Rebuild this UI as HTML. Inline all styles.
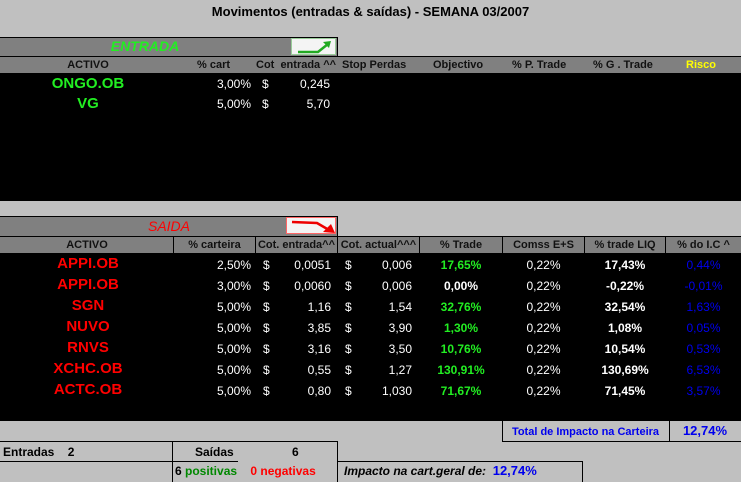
<!DOCTYPE html>
<html><head><meta charset="utf-8"><style>
body{margin:0;width:741px;height:482px;background:#c0c0c0;position:relative;overflow:hidden;font-family:"Liberation Sans",Arial,sans-serif}
div{position:absolute;box-sizing:border-box}
.t{white-space:nowrap;font-size:12px;line-height:14px}
.h{font-weight:bold;font-size:11px;color:#111}
.c{text-align:center}
.r{text-align:right}
.w{color:#fff}
.nm{font-weight:bold;font-size:15px;text-align:center;width:176px;left:0}
</style></head><body>
<div class="t" style="left:0;width:741px;top:5px;text-align:center;font-weight:bold;font-size:13px;color:#000">Movimentos (entradas &amp; saídas) - SEMANA 03/2007</div>

<!-- ENTRADA -->
<div style="left:0;top:37px;width:338px;height:20px;background:#808080;border-top:1px solid #000;border-right:1px solid #000"></div>
<div class="t" style="left:0;width:290px;top:39px;text-align:center;color:#22ee22;font-style:italic;font-weight:bold;font-size:14px">ENTRADA</div>
<div style="left:291px;top:38px;width:45px;height:17px;background:#f4f4f4;border:1px solid #9c9;"><svg width="45" height="17" style="position:absolute;left:0;top:0"><path d="M6 13 L26 13 L36 5" stroke="#2a2" stroke-width="2.5" fill="none"/><path d="M31 3 L39 2 L37 9 Z" fill="#2a2"/></svg></div>
<div style="left:0;top:56px;width:741px;height:17px;background:#808080;border-top:1px solid #000"></div>
<div class="t h c" style="left:0;width:176px;top:58px">ACTIVO</div>
<div class="t h" style="left:197px;top:58px">% cart</div>
<div class="t h" style="left:256px;top:58px">Cot&nbsp; entrada ^^</div>
<div class="t h" style="left:342px;top:58px">Stop Perdas</div>
<div class="t h" style="left:433px;top:58px">Objectivo</div>
<div class="t h" style="left:512px;top:58px">% P. Trade</div>
<div class="t h" style="left:593px;top:58px">% G . Trade</div>
<div class="t h" style="left:686px;top:58px;color:#ff0">Risco</div>
<div style="left:0;top:73px;width:741px;height:128px;background:#000"></div>
<div class="t nm" style="top:77px;color:#22ee22">ONGO.OB</div>
<div class="t nm" style="top:97px;color:#22ee22">VG</div>
<div class="t w r" style="left:200px;width:51px;top:77px">3,00%</div>
<div class="t w" style="left:262px;top:77px">$</div>
<div class="t w r" style="left:280px;width:50px;top:77px">0,245</div>
<div class="t w r" style="left:200px;width:51px;top:97px">5,00%</div>
<div class="t w" style="left:262px;top:97px">$</div>
<div class="t w r" style="left:280px;width:50px;top:97px">5,70</div>

<!-- SAIDA -->
<div style="left:0;top:216px;width:338px;height:21px;background:#808080;border-top:1px solid #000;border-right:1px solid #000"></div>
<div class="t" style="left:0;width:338px;top:219px;text-align:center;color:#f00;font-style:italic;font-size:14px">SAIDA</div>
<div style="left:286px;top:217px;width:50px;height:17px;background:#f4f4f4;border:1px solid #f66"><svg width="50" height="17" style="position:absolute;left:0;top:0"><path d="M5 4 L30 5 L42 12" stroke="#e00" stroke-width="2.5" fill="none"/><path d="M36 14 L48 15 L44 6 Z" fill="#e00"/></svg></div>
<div style="left:0;top:236px;width:741px;height:17px;background:#808080;border-top:1px solid #000"></div>
<div style="left:173px;top:236px;width:1px;height:17px;background:#000"></div>
<div style="left:255px;top:236px;width:1px;height:17px;background:#000"></div>
<div style="left:337px;top:236px;width:1px;height:17px;background:#000"></div>
<div style="left:419px;top:236px;width:1px;height:17px;background:#000"></div>
<div style="left:502px;top:236px;width:1px;height:17px;background:#000"></div>
<div style="left:584px;top:236px;width:1px;height:17px;background:#000"></div>
<div style="left:665px;top:236px;width:1px;height:17px;background:#000"></div>
<div class="t h c" style="left:0;width:174px;top:238px">ACTIVO</div>
<div class="t h c" style="left:174px;width:81px;top:238px">% carteira</div>
<div class="t h c" style="left:256px;width:81px;top:238px">Cot. entrada^^</div>
<div class="t h c" style="left:338px;width:81px;top:238px">Cot. actual^^^</div>
<div class="t h c" style="left:420px;width:82px;top:238px">% Trade</div>
<div class="t h c" style="left:503px;width:81px;top:238px">Comss E+S</div>
<div class="t h c" style="left:585px;width:80px;top:238px">% trade LIQ</div>
<div class="t h c" style="left:666px;width:75px;top:238px">% do I.C ^</div>
<div style="left:0;top:253px;width:741px;height:168px;background:#000"></div>

<div class="t nm" style="top:257px;color:#f00">APPI.OB</div>
<div class="t nm" style="top:278px;color:#f00">APPI.OB</div>
<div class="t nm" style="top:299px;color:#f00">SGN</div>
<div class="t nm" style="top:320px;color:#f00">NUVO</div>
<div class="t nm" style="top:341px;color:#f00">RNVS</div>
<div class="t nm" style="top:362px;color:#f00">XCHC.OB</div>
<div class="t nm" style="top:383px;color:#f00">ACTC.OB</div>

<div class="t w r" style="left:190px;width:61px;top:255px;white-space:pre-line;line-height:21px">2,50%
3,00%
5,00%
5,00%
5,00%
5,00%
5,00%</div>
<div class="t w" style="left:263px;top:255px;white-space:pre-line;line-height:21px">$
$
$
$
$
$
$</div>
<div class="t w r" style="left:270px;width:61px;top:255px;white-space:pre-line;line-height:21px">0,0051
0,0060
1,16
3,85
3,16
0,55
0,80</div>
<div class="t w" style="left:345px;top:255px;white-space:pre-line;line-height:21px">$
$
$
$
$
$
$</div>
<div class="t w r" style="left:350px;width:62px;top:255px;white-space:pre-line;line-height:21px">0,006
0,006
1,54
3,90
3,50
1,27
1,030</div>
<div class="t c" style="left:420px;width:82px;top:255px;line-height:21px;font-weight:bold;color:#22ee22">17,65%<br><span style="color:#fff">0,00%</span><br>32,76%<br>1,30%<br>10,76%<br>130,91%<br>71,67%</div>
<div class="t w c" style="left:503px;width:81px;top:255px;white-space:pre-line;line-height:21px">0,22%
0,22%
0,22%
0,22%
0,22%
0,22%
0,22%</div>
<div class="t w c" style="left:585px;width:80px;top:255px;white-space:pre-line;line-height:21px;font-weight:bold">17,43%
-0,22%
32,54%
1,08%
10,54%
130,69%
71,45%</div>
<div class="t c" style="left:666px;width:75px;top:255px;white-space:pre-line;line-height:21px;color:#0000ee">0,44%
-0,01%
1,63%
0,05%
0,53%
6,53%
3,57%</div>

<!-- totals -->
<div style="left:502px;top:420px;width:239px;height:22px;border-left:1px solid #000;border-bottom:1px solid #000"></div>
<div style="left:669px;top:420px;width:1px;height:22px;background:#000"></div>
<div class="t c" style="left:502px;width:167px;top:425px;font-weight:bold;font-size:11px;color:#00e">Total de Impacto na Carteira</div>
<div class="t c" style="left:670px;width:70px;top:424px;font-weight:bold;font-size:13px;color:#00e">12,74%</div>

<div style="left:0;top:441px;width:238px;height:21px;border-top:1px solid #000;border-bottom:1px solid #000"></div>
<div style="left:172px;top:441px;width:166px;height:41px;border:1px solid #000;border-bottom:none"></div>
<div style="left:337px;top:461px;width:246px;height:21px;border:1px solid #000;border-bottom:none"></div>
<div class="t" style="left:3px;top:445px;font-weight:bold;font-size:12px">Entradas&nbsp;&nbsp;&nbsp;&nbsp;2</div>
<div class="t" style="left:195px;top:445px;font-weight:bold;font-size:12px">Saídas</div>
<div class="t" style="left:292px;top:445px;font-weight:bold;font-size:12px">6</div>
<div class="t" style="left:175px;top:464px;font-weight:bold;font-size:12px">6 <span style="color:#080">positivas</span>&nbsp;&nbsp;&nbsp; <span style="color:#f00">0 negativas</span></div>
<div class="t" style="left:344px;top:464px;font-style:italic;font-weight:bold;font-size:12px">Impacto na cart.geral de:&nbsp; <span style="color:#00e;font-style:normal;font-size:13px">12,74%</span></div>
</body></html>
